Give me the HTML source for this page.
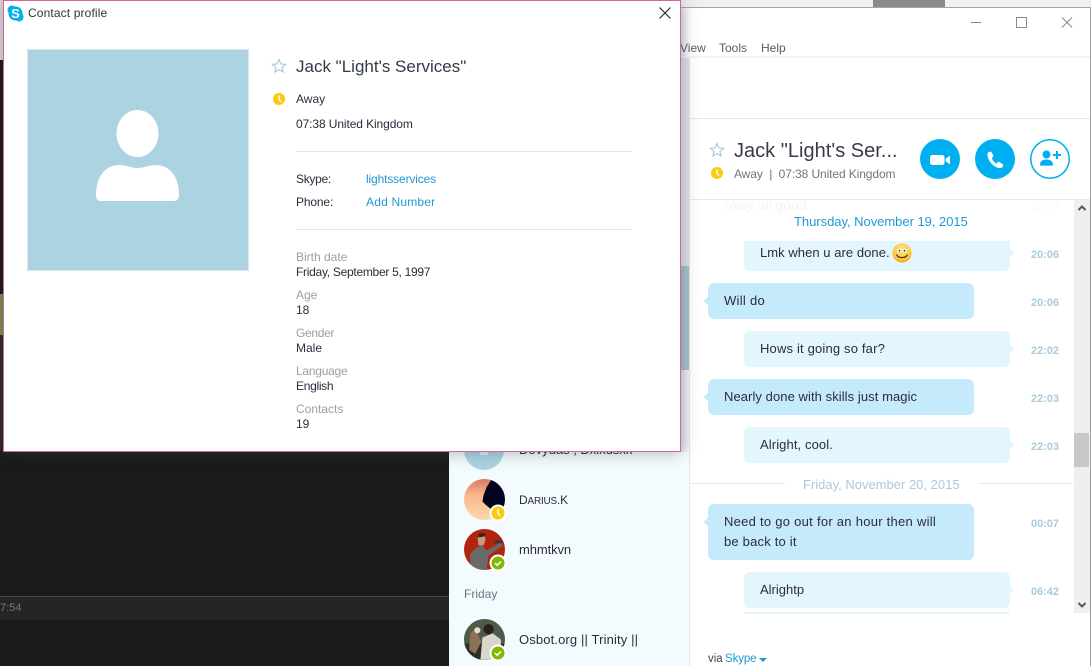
<!DOCTYPE html>
<html><head><meta charset="utf-8"><style>
html,body{margin:0;padding:0;width:1091px;height:666px;overflow:hidden;background:#1a1a1a}
body{position:relative;font-family:"Liberation Sans",sans-serif;font-size:12px;color:#2c2c3c}
div,svg,span.a{position:absolute}
.t{position:absolute;white-space:nowrap;line-height:16px;height:16px}
.c{font-size:13px}
.g{color:#9a9ea6}
.b{color:#1d9ad6}
.m{position:absolute;border-radius:6px;background:#c5eafb}
.n{position:absolute;border-radius:6px;background:#e3f5fd}
.tm{position:absolute;left:1031px;color:#a9cbdd;font-weight:bold;font-size:11px;white-space:nowrap;line-height:14px;letter-spacing:-.05px}
.tail{position:absolute;width:6px;height:6px;transform:rotate(45deg)}
</style></head><body>
<div style="left:0;top:0;width:450px;height:666px;background:#1a1a1a"></div>
<div style="left:0;top:60px;width:4px;height:234px;background:#131313"></div>
<div style="left:0;top:335px;width:4px;height:116px;background:#252525"></div>
<div style="left:0;top:596px;width:449px;height:24px;background:#252525;border-top:1px solid #444;box-sizing:border-box"></div>
<div class="t" style="left:-6px;top:600px;color:#777;font-size:11px">17:54</div>
<div style="left:0;top:0;width:4px;height:60px;background:#ddd"></div>
<div style="left:0;top:294px;width:4px;height:41px;background:#7f8f47"></div>
<div style="left:873px;top:0;width:72px;height:8px;background:#8a8a8a"></div>
<div style="left:680px;top:0;width:193px;height:8px;background:#f0f0f0"></div>
<div style="left:945px;top:0;width:146px;height:8px;background:#f0f0f0"></div>

<!-- skype window -->
<div style="left:449px;top:7px;width:641px;height:659px;background:#fff;border-top:1px solid #a5a5a5;box-sizing:border-box"></div>
<div style="left:1090px;top:7px;width:1px;height:659px;background:#a0a0a0"></div>
<div style="left:449px;top:56px;width:641px;height:2px;background:#f1f3f4"></div>
<!-- sidebar -->
<div style="left:449px;top:58px;width:240px;height:608px;background:#f3fbfe"></div>
<div style="left:689px;top:58px;width:1px;height:608px;background:#e2e8ec"></div>
<div style="left:681px;top:8px;width:9px;height:48px;background:linear-gradient(90deg,#e4e8ea,#fff)"></div>
<div style="left:681px;top:266px;width:8px;height:104px;background:#a5c0cc"></div>
<div style="left:681px;top:58px;width:8px;height:208px;background:#dde3e6"></div>
<div style="left:681px;top:370px;width:8px;height:82px;background:linear-gradient(90deg,#dde3e6,#f0f6f8)"></div>

<div class="t" style="left:680px;top:40px;color:#5a5a6a">View</div>
<div class="t" style="left:719px;top:40px;color:#5a5a6a">Tools</div>
<div class="t" style="left:761px;top:40px;color:#5a5a6a">Help</div>
<svg style="left:1010px;top:12px" width="70" height="22" viewBox="0 0 70 22" fill="none" stroke="#8a8a8a"><rect x="6.500" y="5.500" width="10" height="10"/><path d="M52 5.500L62 15.500M62 5.500L52 15.500"/></svg>
<svg style="left:971px;top:12px" width="12" height="22" fill="none" stroke="#8a8a8a"><path d="M0 10.500H10"/></svg>

<div style="left:690px;top:118px;width:400px;height:1px;background:#e3e9ed"></div>
<div style="left:690px;top:199px;width:400px;height:1px;background:#e3e9ed"></div>

<svg style="left:709px;top:142px" width="16" height="16" viewBox="0 0 16 16"><path d="M8 1.500l1.900 4.400 4.700.4-3.600 3.100 1.100 4.600L8 11.600 3.900 14l1.100-4.600L1.400 6.300l4.700-.4z" fill="none" stroke="#a9c8d8" stroke-width="1.100"/></svg>
<div class="t" style="left:734px;top:137px;height:28px;line-height:28px;font-size:20px;letter-spacing:.02px;color:#3a3a4a">Jack "Light's Ser...</div>
<svg style="left:711px;top:167px" width="12" height="12" viewBox="0 0 12 12"><circle cx="6" cy="6" r="6" fill="#fdc90f"/><path d="M6 2.500V6.500L8 8.500" fill="none" stroke="#fff" stroke-width="1.500"/></svg>
<div class="t" style="left:734px;top:166px;color:#6e7480;letter-spacing:-.1px">Away&nbsp; |&nbsp; 07:38 United Kingdom</div>

<svg style="left:920px;top:139px" width="40" height="40" viewBox="0 0 40 40"><circle cx="20" cy="20" r="20" fill="#00aff0"/><rect x="10" y="16" width="14.500" height="10" rx="2.500" fill="#fff"/><path d="M25.500 20l4.500-3.500v9L25.500 22z" fill="#fff"/></svg>
<svg style="left:975px;top:139px" width="40" height="40" viewBox="0 0 40 40"><circle cx="20" cy="20" r="20" fill="#00aff0"/><path d="M13 13.200L16 12.500 18.800 17 16.800 19C17.500 21.500 19.500 23.600 21.800 24.500L23.500 22.500 28.300 25.500 27.500 28.300C21 32 10 20 13 13.200z" fill="#fff"/></svg>
<svg style="left:1030px;top:139px" width="40" height="40" viewBox="0 0 40 40"><circle cx="20" cy="20" r="19.200" fill="#fff" stroke="#00aff0" stroke-width="1.500"/><circle cx="16.500" cy="15.500" r="4" fill="#00aff0"/><path d="M10 26c0-3.800 2.500-5.500 6.500-5.500S23 22.200 23 26c0 .4-.3.6-.6.6H10.600c-.3 0-.6-.2-.6-.6z" fill="#00aff0"/><path d="M27 12v8M23 16h8" stroke="#00aff0" stroke-width="2"/></svg>

<!-- messages -->
<div class="t" style="left:724px;top:197px;font-size:14px;color:#f2f5f7">okay all good</div>
<div class="t" style="left:1031px;top:198px;font-size:11px;color:#f7f8f9">20:05</div>
<div class="t b" style="left:794px;top:214px;font-size:13px;letter-spacing:-.03px">Thursday, November 19, 2015</div>

<div class="n" style="left:744px;top:241px;width:266px;height:30px;border-radius:0 0 6px 6px"></div>
<div class="tail" style="left:1007px;top:250px;background:#e3f5fd"></div>
<div class="t c" style="left:760px;top:245px;letter-spacing:.05px">Lmk when u are done.</div>
<svg style="left:892px;top:243px" width="20" height="20" viewBox="0 0 20 20"><defs><radialGradient id="sm" cx=".5" cy=".35" r=".7"><stop offset="0" stop-color="#ffe98a"/><stop offset=".7" stop-color="#fcc53a"/><stop offset="1" stop-color="#e8962a"/></radialGradient></defs><circle cx="10" cy="10" r="9.600" fill="url(#sm)"/><ellipse cx="7.300" cy="7.500" rx="2" ry="1.700" fill="#fff"/><ellipse cx="12.700" cy="7.500" rx="2" ry="1.700" fill="#fff"/><circle cx="7.500" cy="7.700" r=".9" fill="#333"/><circle cx="12.500" cy="7.700" r=".9" fill="#333"/><path d="M4.500 11.500c1.500 4 9.500 4 11 0" fill="none" stroke="#4a3310" stroke-width="1.200"/></svg>
<div class="tm" style="top:248px">20:06</div>

<div class="m" style="left:708px;top:283px;width:266px;height:36px"></div>
<div class="tail" style="left:705px;top:298px;background:#c5eafb"></div>
<div class="t c" style="left:724px;top:293px;letter-spacing:.28px">Will do</div>
<div class="tm" style="top:296px">20:06</div>

<div class="n" style="left:744px;top:331px;width:266px;height:36px"></div>
<div class="tail" style="left:1007px;top:346px;background:#e3f5fd"></div>
<div class="t c" style="left:760px;top:341px;letter-spacing:.17px">Hows it going so far?</div>
<div class="tm" style="top:344px">22:02</div>

<div class="m" style="left:708px;top:379px;width:266px;height:36px"></div>
<div class="tail" style="left:705px;top:394px;background:#c5eafb"></div>
<div class="t c" style="left:724px;top:389px;letter-spacing:.07px">Nearly done with skills just magic</div>
<div class="tm" style="top:392px">22:03</div>

<div class="n" style="left:744px;top:427px;width:266px;height:36px"></div>
<div class="tail" style="left:1007px;top:442px;background:#e3f5fd"></div>
<div class="t c" style="left:760px;top:437px;letter-spacing:.1px">Alright, cool.</div>
<div class="tm" style="top:440px">22:03</div>

<div style="left:690px;top:483px;width:95px;height:1px;background:#e3e9ed"></div>
<div style="left:978px;top:483px;width:95px;height:1px;background:#e3e9ed"></div>
<div class="t" style="left:803px;top:477px;font-size:13px;color:#adc8da">Friday, November 20, 2015</div>

<div class="m" style="left:708px;top:504px;width:266px;height:56px"></div>
<div class="tail" style="left:705px;top:519px;background:#c5eafb"></div>
<div class="t c" style="left:724px;top:514px;letter-spacing:.27px">Need to go out for an hour then will</div>
<div class="t c" style="left:724px;top:534px;letter-spacing:.2px">be back to it</div>
<div class="tm" style="top:517px">00:07</div>

<div class="n" style="left:744px;top:572px;width:266px;height:36px"></div>
<div class="tail" style="left:1007px;top:587px;background:#e3f5fd"></div>
<div class="t c" style="left:760px;top:582px">Alrightp</div>
<div class="tm" style="top:585px">06:42</div>
<div class="n" style="left:744px;top:612px;width:266px;height:2px;border-radius:4px 4px 0 0"></div>

<!-- scrollbar -->
<div style="left:1074px;top:200px;width:16px;height:413px;background:#efefef"></div>
<div style="left:1074px;top:433px;width:15px;height:34px;background:#c8c8c8"></div>
<svg style="left:1074px;top:200px" width="16" height="16" fill="none" stroke="#555" stroke-width="2"><path d="M4.500 10L8 6.500 11.500 10"/></svg>
<svg style="left:1074px;top:597px" width="16" height="16" fill="none" stroke="#555" stroke-width="2"><path d="M4.500 6L8 9.500 11.500 6"/></svg>

<div class="t" style="left:708px;top:651px;color:#444;font-size:11.500px">via</div>
<div class="t b" style="left:725px;top:651px;font-size:11.500px;letter-spacing:-.1px">Skype</div>
<svg style="left:759px;top:658px" width="9" height="5"><path d="M0 0H8L4 4z" fill="#1d9ad6"/></svg>

<!-- contacts -->
<svg style="left:464px;top:430px" width="40" height="40" viewBox="0 0 40 40"><circle cx="20" cy="20" r="20" fill="#acd3e2"/><path d="M16 19h8v6h-8z" fill="#dfeef4"/></svg>
<div class="t c" style="left:519px;top:442px">Dovydas ; Dxlxusxk</div>
<svg style="left:464px;top:479px" width="41" height="41" viewBox="0 0 40 40"><defs><clipPath id="c1"><circle cx="20" cy="20" r="20"/></clipPath><linearGradient id="g1" x1="0" y1="0" x2="0" y2="1"><stop offset="0" stop-color="#d97a64"/><stop offset=".4" stop-color="#f8b98c"/><stop offset="1" stop-color="#fbd9a9"/></linearGradient></defs><g clip-path="url(#c1)"><rect width="40" height="40" fill="url(#g1)"/><path d="M40 0H27L22 8 19 16 18 22 21 25 27 30V40H40z" fill="#03041f"/></g></svg>
<svg style="left:464px;top:529px" width="41" height="41" viewBox="0 0 40 40"><defs><clipPath id="c2"><circle cx="20" cy="20" r="20"/></clipPath></defs><g clip-path="url(#c2)"><rect width="40" height="40" fill="#b3240f"/><path d="M6 40V24l6-6 6-2 4 5 14-8 2 3-14 10-2 14z" fill="#6a6a6a"/><path d="M13 6l7-1 1 6-2 5h-5z" fill="#c99a80"/><path d="M13 8c0-3 3-5 7-4l1 3-5 1z" fill="#3a2820"/><path d="M30 11h7v3h-7z" fill="#3a3a3a"/></g></svg>
<svg style="left:464px;top:619px" width="41" height="41" viewBox="0 0 40 40"><defs><clipPath id="c3"><circle cx="20" cy="20" r="20"/></clipPath></defs><g clip-path="url(#c3)"><rect width="40" height="40" fill="#4e5a4a"/><rect y="24" width="40" height="16" fill="#2f2e24"/><path d="M18 18l10-4 8 6v20H16z" fill="#d8d7ce"/><circle cx="24" cy="10" r="5" fill="#2c2018"/><path d="M6 14l5-4 6 12-6 12-6-4z" fill="#8a7158"/><circle cx="13" cy="11" r="3" fill="#e8decb"/></g></svg>

<svg style="left:489px;top:504px" width="18" height="18" viewBox="0 0 18 18"><circle cx="9" cy="9" r="8.500" fill="#fff"/><circle cx="9" cy="9" r="6.500" fill="#fdc90f"/><path d="M9 5v4.500l2 2" fill="none" stroke="#fff" stroke-width="1.500"/></svg>
<svg style="left:489px;top:554px" width="18" height="18" viewBox="0 0 18 18"><circle cx="9" cy="9" r="8.500" fill="#fff"/><circle cx="9" cy="9" r="6.500" fill="#7fba00"/><path d="M6 9l2.200 2.200L12 7.500" fill="none" stroke="#fff" stroke-width="1.500"/></svg>
<svg style="left:489px;top:644px" width="18" height="18" viewBox="0 0 18 18"><circle cx="9" cy="9" r="8.500" fill="#fff"/><circle cx="9" cy="9" r="6.500" fill="#7fba00"/><path d="M6 9l2.200 2.200L12 7.500" fill="none" stroke="#fff" stroke-width="1.500"/></svg>

<div class="t" style="left:519px;top:492px;letter-spacing:-.2px">D<span style="font-size:10px">ARIUS</span>.K</div>
<div class="t c" style="left:519px;top:542px;letter-spacing:-.1px">mhmtkvn</div>
<div class="t" style="left:464px;top:586px;color:#6e7480">Friday</div>
<div class="t c" style="left:519px;top:632px;letter-spacing:.13px">Osbot.org || Trinity ||</div>

<!-- dialog -->
<div style="left:3px;top:0;width:678px;height:452px;background:#fff;border:1px solid #d9629c;box-sizing:border-box;box-shadow:0 0 16px rgba(60,70,80,.4)"></div>
<svg style="left:7px;top:5px" width="17" height="17" viewBox="0 0 17 17"><circle cx="5" cy="5" r="4.500" fill="#00aff0"/><circle cx="12" cy="12" r="4.500" fill="#00aff0"/><circle cx="8.500" cy="8.500" r="7" fill="#00aff0"/><text x="8.500" y="13" text-anchor="middle" font-family="Liberation Sans" font-weight="bold" font-size="13" fill="#fff">S</text></svg>
<div class="t" style="left:28px;top:5px;color:#333;letter-spacing:.13px">Contact profile</div>
<svg style="left:659px;top:7px" width="12" height="12" fill="none" stroke="#222" stroke-width="1.100"><path d="M.5.500l11 11M11.500.500l-11 11"/></svg>

<div style="left:27px;top:49px;width:222px;height:222px;background:#acd3e2;border:1px solid #dfe6e9;box-sizing:border-box"></div>
<svg style="left:96px;top:110px" width="84" height="92" viewBox="0 0 84 92" fill="#fff"><ellipse cx="41.500" cy="23.500" rx="21" ry="23.500"/><path d="M0 85C0 68 8 55 24 55 30 55 35 58 41.500 58 48 58 53 55 59 55 75 55 83 68 83 85 83 89 81 91 78 91H5C2 91 0 89 0 85z"/></svg>

<svg style="left:271px;top:58px" width="16" height="16" viewBox="0 0 16 16"><path d="M8 1.500l1.900 4.400 4.700.4-3.600 3.100 1.100 4.600L8 11.600 3.900 14l1.100-4.600L1.400 6.300l4.700-.4z" fill="none" stroke="#a9c8d8" stroke-width="1.100"/></svg>
<div class="t" style="left:296px;top:55px;height:24px;line-height:24px;font-size:17px;color:#333a48">Jack "Light's Services"</div>
<svg style="left:273px;top:93px" width="12" height="12" viewBox="0 0 12 12"><circle cx="6" cy="6" r="6" fill="#fdc90f"/><path d="M6 2.500V6.500L8 8.500" fill="none" stroke="#fff" stroke-width="1.500"/></svg>
<div class="t" style="left:296px;top:91px">Away</div>
<div class="t" style="left:296px;top:116px;letter-spacing:-.1px">07:38 United Kingdom</div>
<div style="left:296px;top:151px;width:336px;height:1px;background:#e4e6e8"></div>
<div class="t" style="left:296px;top:171px;letter-spacing:-.3px">Skype:</div>
<div class="t b" style="left:366px;top:171px;letter-spacing:-.14px">lightsservices</div>
<div class="t" style="left:296px;top:194px;letter-spacing:-.15px">Phone:</div>
<div class="t b" style="left:366px;top:194px;letter-spacing:.2px">Add Number</div>
<div style="left:296px;top:229px;width:336px;height:1px;background:#e4e6e8"></div>
<div class="t g" style="left:296px;top:249px">Birth date</div>
<div class="t" style="left:296px;top:264px;letter-spacing:-.28px">Friday, September 5, 1997</div>
<div class="t g" style="left:296px;top:287px">Age</div>
<div class="t" style="left:296px;top:302px">18</div>
<div class="t g" style="left:296px;top:325px;letter-spacing:-.3px">Gender</div>
<div class="t" style="left:296px;top:340px">Male</div>
<div class="t g" style="left:296px;top:363px;letter-spacing:-.25px">Language</div>
<div class="t" style="left:296px;top:378px;letter-spacing:-.3px">English</div>
<div class="t g" style="left:296px;top:401px">Contacts</div>
<div class="t" style="left:296px;top:416px">19</div>
</body></html>
